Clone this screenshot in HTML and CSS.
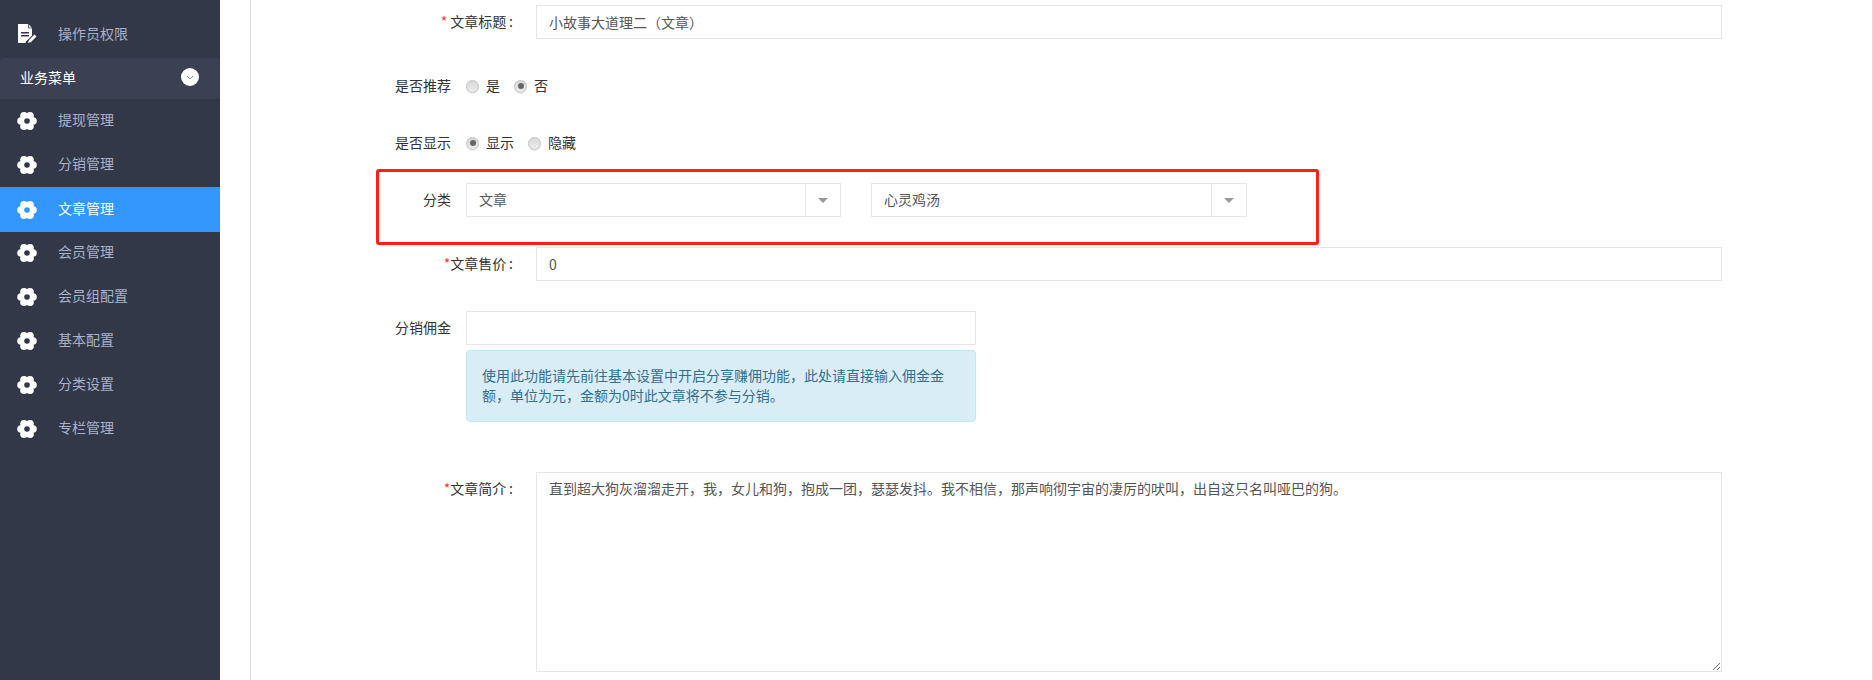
FILE: index.html
```html
<!DOCTYPE html>
<html lang="zh-CN">
<head>
    <meta charset="UTF-8">
    <title>文章管理</title>
    <link rel="stylesheet" href="styles.css">
</head>
<body>
    <svg class="icon-defs" width="0" height="0">
        <symbol id="gear" viewBox="0 0 20 20">
            <circle cx="16" cy="10" r="3.8"/>
            <circle cx="13" cy="15.2" r="3.8"/>
            <circle cx="7" cy="15.2" r="3.8"/>
            <circle cx="4" cy="10" r="3.8"/>
            <circle cx="7" cy="4.8" r="3.8"/>
            <circle cx="13" cy="4.8" r="3.8"/>
            <circle cx="10" cy="10" r="6"/>
            <circle class="gear-hole" cx="10" cy="10" r="2.8"/>
        </symbol>
    </svg>

    <div class="layout">
        <aside class="sidebar">
            <a class="menu-item menu-item-first">
                <svg class="menu-icon" viewBox="0 0 20 20">
                    <path d="M1 0h10.500l3.500 4v15H1z" fill="#fff"/>
                    <path d="M11.500 0v4H15" fill="none" stroke="#333849" stroke-width=".8"/>
                    <path d="M4 8h8v1.600H4zM4 11h8v1.600H4z" fill="#333849"/>
                    <path d="M10 20l8-8" stroke="#333849" stroke-width="5"/>
                    <path d="M11 19l1-3 5.500-5.500 2 2L14 18z" fill="#fff"/>
                </svg>
                <span>操作员权限</span>
            </a>

            <div class="menu-title">
                <span>业务菜单</span>
                <span class="menu-toggle">
                    <svg width="8" height="5" viewBox="0 0 8 5"><path d="M1 1l3 3 3-3" fill="none" stroke="#8a8fa3"/></svg>
                </span>
            </div>

            <a class="menu-item"><svg class="menu-icon"><use href="#gear"/></svg><span>提现管理</span></a>
            <a class="menu-item"><svg class="menu-icon"><use href="#gear"/></svg><span>分销管理</span></a>
            <a class="menu-item active"><svg class="menu-icon"><use href="#gear"/></svg><span>文章管理</span></a>
            <a class="menu-item"><svg class="menu-icon"><use href="#gear"/></svg><span>会员管理</span></a>
            <a class="menu-item"><svg class="menu-icon"><use href="#gear"/></svg><span>会员组配置</span></a>
            <a class="menu-item"><svg class="menu-icon"><use href="#gear"/></svg><span>基本配置</span></a>
            <a class="menu-item"><svg class="menu-icon"><use href="#gear"/></svg><span>分类设置</span></a>
            <a class="menu-item"><svg class="menu-icon"><use href="#gear"/></svg><span>专栏管理</span></a>
        </aside>

        <main class="panel">
            <form class="article-form">
                <div class="form-row row-wide row-title">
                    <label><em>*</em> 文章标题&thinsp;:</label>
                    <input type="text" value="小故事大道理二（文章）">
                </div>

                <div class="form-row row-recommend">
                    <label>是否推荐</label>
                    <span class="radio"></span><span class="radio-text">是</span>
                    <span class="radio checked"></span><span class="radio-text">否</span>
                </div>

                <div class="form-row row-show">
                    <label>是否显示</label>
                    <span class="radio checked"></span><span class="radio-text">显示</span>
                    <span class="radio"></span><span class="radio-text">隐藏</span>
                </div>

                <div class="category-box">
                    <label>分类</label>
                    <div class="select-box">
                        <span class="select-value">文章</span>
                        <span class="select-arrow"></span>
                    </div>
                    <div class="select-box select-box-second">
                        <span class="select-value">心灵鸡汤</span>
                        <span class="select-arrow"></span>
                    </div>
                </div>

                <div class="form-row row-wide row-price">
                    <label><em>*</em>文章售价&thinsp;:</label>
                    <input type="text" value="0">
                </div>

                <div class="form-row row-commission">
                    <label>分销佣金</label>
                    <div class="commission-field">
                        <input type="text">
                        <div class="alert-info">使用此功能请先前往基本设置中开启分享赚佣功能，此处请直接输入佣金金额，单位为元，金额为0时此文章将不参与分销。</div>
                    </div>
                </div>

                <div class="form-row row-wide row-intro">
                    <label><em>*</em>文章简介&thinsp;:</label>
                    <textarea>直到超大狗灰溜溜走开，我，女儿和狗，抱成一团，瑟瑟发抖。我不相信，那声响彻宇宙的凄厉的吠叫，出自这只名叫哑巴的狗。</textarea>
                </div>
            </form>
        </main>
    </div>
</body>
</html>
```

FILE: styles.css
```css
* {
    box-sizing: border-box;
}

html,
body {
    height: 100%;
}

body {
    margin: 0;
    overflow: hidden;
    background: #fff;
    color: #333;
    font-family: "Noto Sans CJK SC", "Liberation Sans", sans-serif;
    font-size: 14px;
}

.icon-defs {
    display: block;
    height: 0;
}

.layout {
    display: flex;
    height: 680px;
}

/* sidebar */
.sidebar {
    width: 220px;
    flex-shrink: 0;
    background: #333849;
}

.menu-item {
    --hole: #333849;
    display: flex;
    align-items: center;
    height: 44px;
    padding: 0 0 4px 17px;
    color: #a9b0c9;
}

.menu-item-first {
    height: 47px;
    margin-top: 11px;
    padding-bottom: 2px;
    align-items: flex-start;
    padding-top: 12px;
}

.menu-item.active {
    --hole: #3296fa;
    height: 45px;
    margin-bottom: -1px;
    background: #3296fa;
    color: #fff;
}

.menu-icon {
    width: 20px;
    height: 20px;
    margin-right: 21px;
    flex-shrink: 0;
    fill: #fff;
    position: relative;
    top: 2px;
}

.menu-item-first .menu-icon {
    top: 1px;
}

.gear-hole {
    fill: var(--hole);
}

.menu-title {
    display: flex;
    align-items: center;
    justify-content: space-between;
    height: 41px;
    padding: 0 21px 3px 20px;
    background: #3b4052;
    border-radius: 4px 4px 0 0;
    color: #fff;
}

.menu-toggle {
    display: flex;
    align-items: center;
    justify-content: center;
    width: 18px;
    height: 18px;
    border-radius: 50%;
    background: #fff;
}

/* content */
.panel {
    flex: 1;
    margin-left: 30px;
    border-left: 1px solid #ddd;
    border-right: 1px solid #ddd;
}

.article-form {
    padding: 5px 150px 0 0;
}

.form-row {
    display: flex;
    align-items: center;
    height: 34px;
}

.form-row label {
    width: 200px;
    margin-right: 15px;
    padding-bottom: 2px;
    text-align: right;
    flex-shrink: 0;
}

.row-wide label {
    width: 262px;
    margin-right: 23px;
}

label em {
    color: #f33;
    font-style: normal;
}

input,
textarea {
    display: block;
    width: 100%;
    border: 1px solid #e6e6e6;
    background: #fff;
    color: #555;
    font-family: inherit;
    font-size: 14px;
    padding: 0 12px;
    outline: none;
}

input {
    height: 34px;
    padding-bottom: 1px;
}

.row-recommend {
    margin-top: 30px;
}

.row-show {
    margin-top: 23px;
}

.radio {
    width: 13px;
    height: 13px;
    margin-right: 7px;
    border: 1px solid #c2c2c2;
    border-radius: 50%;
    background: linear-gradient(#d8d8d8, #ececec);
    box-shadow: 0 1px 1px rgba(0, 0, 0, 0.08);
    display: flex;
    align-items: center;
    justify-content: center;
    flex-shrink: 0;
}

.radio.checked::after {
    content: "";
    width: 6px;
    height: 6px;
    border-radius: 50%;
    background: #666;
}

.radio-text {
    margin-right: 14px;
    padding-bottom: 2px;
}

.category-box {
    display: flex;
    align-items: flex-start;
    width: 943px;
    height: 76px;
    margin: 9px 0 2px 125px;
    padding-top: 11px;
    border: 3px solid #ff2116;
    border-radius: 3px;
}

.category-box label {
    width: 72px;
    margin-right: 15px;
    line-height: 32px;
    text-align: right;
    flex-shrink: 0;
}

.select-box {
    display: flex;
    width: 375px;
    height: 34px;
    border: 1px solid #e6e6e6;
    color: #555;
}

.select-box-second {
    margin-left: 30px;
    width: 376px;
}

.select-value {
    flex: 1;
    padding-left: 12px;
    line-height: 30px;
}

.select-arrow {
    display: flex;
    align-items: center;
    justify-content: center;
    width: 35px;
    border-left: 1px solid #e6e6e6;
}

.select-arrow::after {
    content: "";
    border-top: 5px solid #999;
    border-left: 5px solid transparent;
    border-right: 5px solid transparent;
}

.row-commission {
    align-items: flex-start;
    height: 111px;
    margin-top: 30px;
}

.row-commission label {
    line-height: 32px;
}

.commission-field {
    width: 510px;
}

.alert-info {
    height: 72px;
    margin-top: 5px;
    padding: 14px 18px 0 15px;
    border: 1px solid #bce8f1;
    border-radius: 4px;
    background: #d9edf7;
    color: #31708f;
    line-height: 20px;
}

.row-intro {
    align-items: flex-start;
    height: 200px;
    margin-top: 50px;
}

.row-intro label {
    padding-top: 6px;
    line-height: 20px;
}

.row-intro textarea {
    height: 200px;
    padding: 5px 12px;
    line-height: 20px;
}
```
